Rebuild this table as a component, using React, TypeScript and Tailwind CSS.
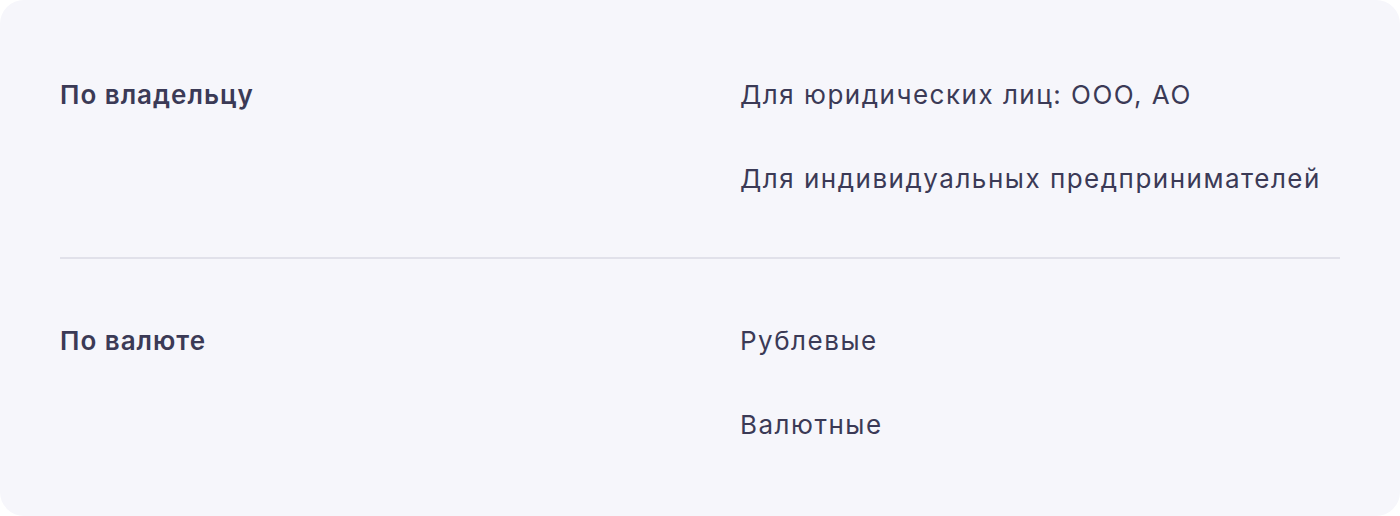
export default function App() {
  const text = "text-[#3b3a56] text-[26px] leading-[40px] tracking-[1.5px]";
  const label = "text-[#3b3a56] text-[26px] leading-[40px] tracking-[1px] font-semibold w-[680px]";
  return (
    <div className="w-[1400px] h-[516px] bg-white" style={{ fontFamily: "Inter, 'Noto Sans', sans-serif" }}>
      <div className="w-full h-full bg-[#f6f6fb] rounded-[24px] px-[60px] flex flex-col">
        <div className="flex pt-[75px] pb-[58px] border-b-2 border-[#e1e1ea]">
          <div className={label}>По владельцу</div>
          <div className="flex flex-col gap-[44px]">
            <div className={text}>Для юридических лиц: ООО, АО</div>
            <div className={text}>Для индивидуальных предпринимателей</div>
          </div>
        </div>
        <div className="flex pt-[62px]">
          <div className={label}>По валюте</div>
          <div className="flex flex-col gap-[44px]">
            <div className={text}>Рублевые</div>
            <div className={text}>Валютные</div>
          </div>
        </div>
      </div>
    </div>
  );
}
